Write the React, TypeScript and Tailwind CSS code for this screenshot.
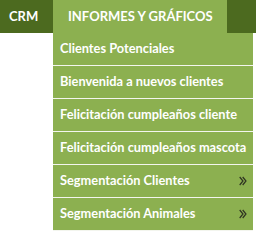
import React from "react";

const items = [
  { label: "Clientes Potenciales", sub: false },
  { label: "Bienvenida a nuevos clientes", sub: false },
  { label: "Felicitación cumpleaños cliente", sub: false },
  { label: "Felicitación cumpleaños mascota", sub: false },
  { label: "Segmentación Clientes", sub: true },
  { label: "Segmentación Animales", sub: true },
];

function Chevrons() {
  return (
    <svg width="8" height="10" viewBox="0 0 8 10" className="shrink-0 mr-[1px]">
      <path d="M0.7 1 L4 5 L0.7 9" fill="none" stroke="#2f3322" strokeWidth="1.2" />
      <path d="M3.7 1 L7 5 L3.7 9" fill="none" stroke="#2f3322" strokeWidth="1.2" />
    </svg>
  );
}

export default function App() {
  return (
    <div className="w-[256px] h-[232px] bg-white overflow-hidden" style={{ fontFamily: "Lato, 'Open Sans', sans-serif" }}>
      <div className="flex h-[33px] bg-[#4c6a1f]">
        <div className="w-[53px] flex items-center pl-[9px] text-white font-bold text-[13px]">CRM</div>
        <div className="w-[174px] flex items-center pl-[15px] bg-[#8cb050] text-white font-bold text-[13px] whitespace-nowrap">
          INFORMES Y GRÁFICOS
        </div>
      </div>
      <div className="ml-[53px] w-[200px] flex flex-col">
        {items.map((it) => (
          <div
            key={it.label}
            className="h-[33px] flex items-center justify-between pl-[7px] pr-[5px] bg-[#8cb050] border-b border-[#f3f5ee] text-white font-bold text-[12.8px] whitespace-nowrap"
          >
            <span>{it.label}</span>
            {it.sub && <Chevrons />}
          </div>
        ))}
      </div>
    </div>
  );
}
